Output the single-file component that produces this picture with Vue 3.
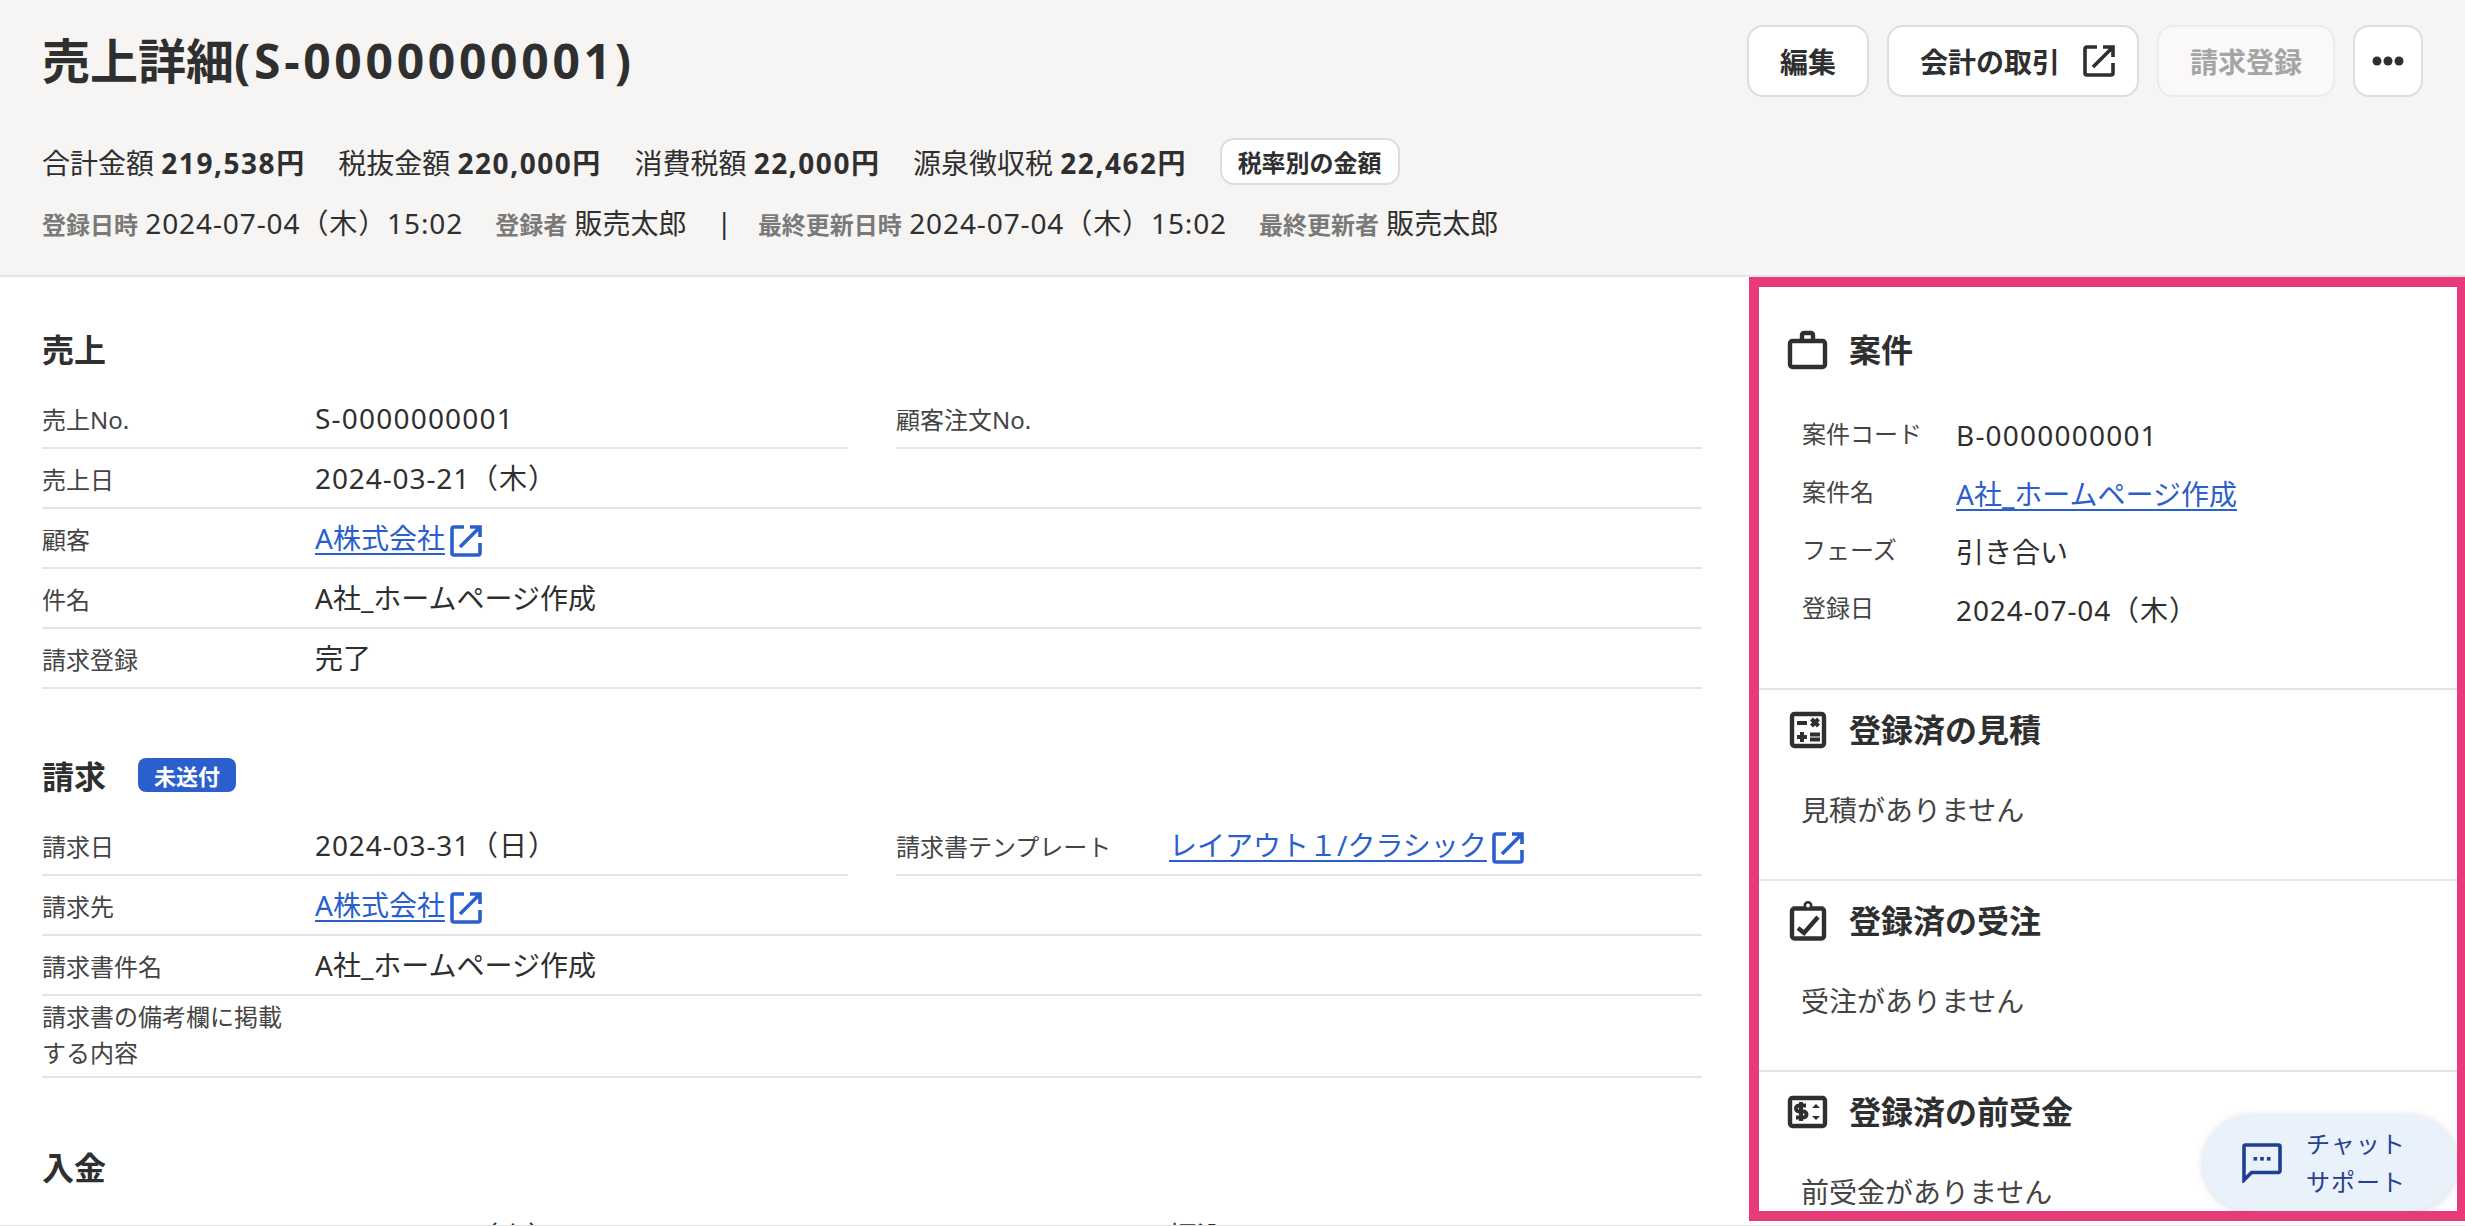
<script setup>
const summary = [
  { label: "合計金額", value: "219,538円" },
  { label: "税抜金額", value: "220,000円" },
  { label: "消費税額", value: "22,000円" },
  { label: "源泉徴収税", value: "22,462円" },
]

const salesRows = [
  { label: "売上No.", value: "S-0000000001", half: true, kind: "code" },
  { label: "顧客注文No.", value: "", half: true },
  { label: "売上日", value: "2024-03-21（木）", kind: "date" },
  { label: "顧客", link: "A株式会社" },
  { label: "件名", value: "A社_ホームページ作成" },
  { label: "請求登録", value: "完了" },
]

const billingRows = [
  { label: "請求日", value: "2024-03-31（日）", half: true, kind: "date" },
  { label: "請求書テンプレート", link: "レイアウト１/クラシック", half: true },
  { label: "請求先", link: "A株式会社" },
  { label: "請求書件名", value: "A社_ホームページ作成" },
  { label: "請求書の備考欄に掲載する内容", value: "", tall: true },
]

const paymentRows = [
  { label: "入金日", value: "2024-04-30（火）", half: true, kind: "date" },
  { label: "入金方法", value: "振込", half: true },
]

const sections = [
  { title: "売上", rows: salesRows },
  { title: "請求", badge: "未送付", rows: billingRows },
  { title: "入金", rows: paymentRows },
]

const projectRows = [
  { label: "案件コード", value: "B-0000000001", kind: "code" },
  { label: "案件名", link: "A社_ホームページ作成" },
  { label: "フェーズ", value: "引き合い" },
  { label: "登録日", value: "2024-07-04（木）", kind: "date" },
]
</script>

<template>
  <div class="page">
    <header class="header">
      <div class="title-row">
        <h1 class="title">売上詳細<span class="title-no">(S-0000000001)</span></h1>
        <div class="actions">
          <button class="btn">編集</button>
          <button class="btn btn-ext">
            会計の取引
            <svg class="ext" viewBox="0 0 32 32"><path d="M14 2H4a2 2 0 0 0-2 2v24a2 2 0 0 0 2 2h24a2 2 0 0 0 2-2V18M20 2h10v10M30 2 10 22" /></svg>
          </button>
          <button class="btn btn-disabled">請求登録</button>
          <button class="btn btn-more" aria-label="その他">
            <svg width="32" height="10" viewBox="0 0 32 10"><circle cx="5" cy="5" r="4.5" /><circle cx="16" cy="5" r="4.5" /><circle cx="27" cy="5" r="4.5" /></svg>
          </button>
        </div>
      </div>
      <div class="summary">
        <span v-for="item in summary" :key="item.label">{{ item.label }} <b>{{ item.value }}</b></span>
        <button class="chip">税率別の金額</button>
      </div>
      <div class="meta">
        <span><small>登録日時</small> <i class="date">2024-07-04（木）15:02</i></span>
        <span><small>登録者</small> <i>販売太郎</i></span>
        <span class="sep">|</span>
        <span><small>最終更新日時</small> <i class="date">2024-07-04（木）15:02</i></span>
        <span><small>最終更新者</small> <i>販売太郎</i></span>
      </div>
    </header>

    <div class="content">
      <main class="main">
        <section v-for="section in sections" :key="section.title" class="block">
          <h2 class="block-title">
            {{ section.title }}
            <span v-if="section.badge" class="badge">{{ section.badge }}</span>
          </h2>
          <div class="rows">
            <div
              v-for="row in section.rows"
              :key="row.label"
              class="row"
              :class="{ full: !row.half, tall: row.tall }"
            >
              <div class="row-label">{{ row.label }}</div>
              <div class="row-value" :class="row.kind">
                <template v-if="row.link">
                  <a class="link">{{ row.link }}</a>
                  <svg class="ext ext-link" viewBox="0 0 32 32"><path d="M14 2H4a2 2 0 0 0-2 2v24a2 2 0 0 0 2 2h24a2 2 0 0 0 2-2V18M20 2h10v10M30 2 10 22" /></svg>
                </template>
                <template v-else>{{ row.value }}</template>
              </div>
            </div>
          </div>
        </section>
      </main>

      <aside class="side">
        <section class="side-block first">
          <h3 class="side-title">
            <svg class="side-icon" viewBox="0 0 40 40"><rect x="2" y="11" width="35" height="26" rx="2.5" /><path d="M14 10V5a2 2 0 0 1 2-2h7a2 2 0 0 1 2 2v5" /></svg>
            案件
          </h3>
          <div class="side-rows">
            <div v-for="row in projectRows" :key="row.label" class="side-row">
              <div class="side-label">{{ row.label }}</div>
              <div class="side-value" :class="row.kind">
                <a v-if="row.link" class="link">{{ row.link }}</a>
                <template v-else>{{ row.value }}</template>
              </div>
            </div>
          </div>
        </section>

        <section class="side-block">
          <h3 class="side-title">
            <svg class="side-icon" viewBox="0 0 40 40">
              <rect x="4" y="4" width="32" height="32" rx="2.5" />
              <path class="thin" d="M9 13h10M23.5 9l7 7M30.5 9l-7 7M9 27h10M14 22v10M22 24.5h10M22 29.5h10" />
            </svg>
            登録済の見積
          </h3>
          <p class="empty">見積がありません</p>
        </section>

        <section class="side-block">
          <h3 class="side-title">
            <svg class="side-icon" viewBox="0 0 40 40">
              <rect x="4" y="7.5" width="32" height="30" rx="2.5" />
              <path d="m10 27 6 5 14-16" />
              <circle cx="20" cy="4.5" r="3.2" class="knob" />
            </svg>
            登録済の受注
          </h3>
          <p class="empty">受注がありません</p>
        </section>

        <section class="side-block">
          <h3 class="side-title">
            <svg class="side-icon" viewBox="0 0 40 40">
              <rect x="2" y="6" width="35" height="28" rx="2.5" />
              <path class="thin" d="M18 13.5h-7a2.5 2.5 0 0 0 0 6h4.5a2.5 2.5 0 0 1 0 6H8M13 10v19" />
              <path class="fill" d="M28 12l4 4h-8zM28 28l-4-4h8z" />
            </svg>
            登録済の前受金
          </h3>
          <p class="empty">前受金がありません</p>
        </section>

        <div class="chat">
          <svg class="chat-icon" viewBox="0 0 40 40">
            <path d="M2 3.5a1.5 1.5 0 0 1 1.5-1.5h33a1.5 1.5 0 0 1 1.5 1.5V28a1.5 1.5 0 0 1-1.5 1.5H9.5L2 37z" />
            <rect x="11.5" y="14" width="3.6" height="3.6" class="dot" />
            <rect x="18.2" y="14" width="3.6" height="3.6" class="dot" />
            <rect x="24.9" y="14" width="3.6" height="3.6" class="dot" />
          </svg>
          <div class="chat-text">チャット<br />サポート</div>
        </div>
      </aside>
    </div>
  </div>
</template>

<style scoped>
.page {
  height: 100vh;
  box-sizing: border-box;
  display: flex;
  flex-direction: column;
  overflow: hidden;
  background: #fff;
  color: #2f2f2f;
  border-bottom: 1px solid #e5e5e5;
  font-family: "Noto Sans", "Noto Sans CJK JP", sans-serif;
  font-size: 28px;
}

.date {
  letter-spacing: 0.032em;
}

.code {
  letter-spacing: 0.043em;
}

.header {
  flex: none;
  box-sizing: border-box;
  height: 277px;
  padding: 25px 42px 0;
  background: #f6f5f3;
  border-bottom: 2px solid #e5e5e5;
}

.title-row {
  display: flex;
  justify-content: space-between;
  align-items: center;
  height: 72px;
}

.title {
  margin: 0;
  font-size: 48px;
  font-weight: 700;
  line-height: 72px;
}

.title-no {
  letter-spacing: 0.077em;
}

.actions {
  display: flex;
  gap: 18px;
}

.btn {
  display: flex;
  align-items: center;
  justify-content: center;
  box-sizing: border-box;
  height: 72px;
  padding: 0 31px;
  background: #fff;
  border: 2px solid #dddddd;
  border-radius: 16px;
  font: inherit;
  font-weight: 700;
  color: #2f2f2f;
}

.btn-ext {
  gap: 23px;
  padding-right: 22px;
}

.btn-disabled {
  background: #faf8f8;
  border-color: #ebebeb;
  color: #a5a5a5;
}

.btn-more {
  width: 70px;
  padding: 0;
}

.btn-more svg {
  fill: #2f2f2f;
}

.ext {
  width: 32px;
  height: 32px;
  fill: none;
  stroke: currentColor;
  stroke-width: 3.6;
  flex: none;
}

.summary {
  display: flex;
  align-items: center;
  gap: 32.5px;
  margin-top: 41px;
  height: 47px;
  white-space: nowrap;
}

.summary b {
  font-weight: 700;
  letter-spacing: 0.055em;
}

.chip {
  box-sizing: border-box;
  height: 47px;
  padding: 0 16px;
  background: #fff;
  border: 2px solid #dddddd;
  border-radius: 14px;
  font: inherit;
  font-size: 24px;
  font-weight: 700;
  color: #2f2f2f;
}

.meta {
  display: flex;
  align-items: center;
  gap: 32px;
  margin-top: 19px;
  height: 36px;
  white-space: nowrap;
}

.meta small {
  font-size: 24px;
  font-weight: 700;
  color: #7a7a7a;
}

.meta i {
  font-style: normal;
}

.sep {
  margin: 0 -6px 0 -2px;
}

.content {
  flex: 1;
  min-height: 0;
  display: flex;
}

.main {
  flex: none;
  box-sizing: border-box;
  width: 1749px;
  padding: 53px 47px 0 42px;
}

.block + .block {
  margin-top: 68px;
}

.block:last-child {
  margin-top: 70px;
}

.block-title {
  display: flex;
  align-items: center;
  box-sizing: border-box;
  gap: 32px;
  height: 40px;
  padding-bottom: 4px;
  margin: 0 0 19px;
  font-size: 32px;
  font-weight: 700;
}

.badge {
  display: flex;
  align-items: center;
  justify-content: center;
  width: 98px;
  height: 34px;
  background: #2b5fce;
  border-radius: 8px;
  color: #fff;
  font-size: 22px;
  font-weight: 700;
}

.rows {
  display: grid;
  grid-template-columns: 806px 806px;
  column-gap: 48px;
}

.row {
  display: flex;
  box-sizing: border-box;
  align-items: center;
  height: 60px;
  border-bottom: 2px solid #e5e5e5;
}

.row.full {
  grid-column: 1 / -1;
}

.row.tall {
  height: 82px;
}

.row-label {
  flex: none;
  box-sizing: border-box;
  width: 273px;
  padding: 4px 24px 0 0;
  font-size: 24px;
  line-height: 36px;
  color: #444;
}

.tall .row-label {
  padding: 0 24px 3px 0;
}

.row-value {
  display: flex;
  align-items: center;
  line-height: 40px;
  white-space: nowrap;
}

.link {
  color: #2b5fce;
  text-decoration: underline;
  text-decoration-thickness: 2px;
  text-underline-offset: 4px;
}

.ext-link {
  margin: 6px 0 0 5px;
  color: #2b5fce;
}

.side {
  position: relative;
  flex: 1;
  min-width: 0;
  margin-bottom: 4px;
  border: 10px solid #e83a7a;
  border-right-width: 8px;
  overflow: hidden;
}

.side-block {
  box-sizing: border-box;
  height: 191px;
  padding: 20px 0 0 29px;
  border-bottom: 2px solid #e5e5e5;
}

.side-block.first {
  height: 403px;
  padding-top: 43px;
}

.side-title {
  display: flex;
  align-items: center;
  gap: 21px;
  height: 40px;
  margin: 0;
  font-size: 32px;
  font-weight: 700;
  line-height: 36px;
}

.side-icon {
  flex: none;
  width: 40px;
  height: 40px;
  fill: none;
  stroke: #2f2f2f;
  stroke-width: 4.4;
  overflow: visible;
}

.side-icon .thin {
  stroke-width: 4;
}

.side-icon .fill {
  fill: #2f2f2f;
  stroke: none;
}

.side-icon .knob {
  fill: #fff;
  stroke-width: 2.6;
}

.side-rows {
  margin: 36px 0 0 14px;
}

.side-row {
  display: flex;
  align-items: center;
  height: 58px;
}

.side-label {
  flex: none;
  width: 154px;
  padding-bottom: 6px;
  font-size: 24px;
  color: #444;
}

.side-value {
  white-space: nowrap;
}

.empty {
  margin: 40px 0 0 13px;
  line-height: 40px;
  color: #444;
}

.chat {
  position: absolute;
  right: 0;
  bottom: 0;
  display: flex;
  align-items: center;
  box-sizing: border-box;
  width: 254px;
  height: 96px;
  padding: 0 0 0 39px;
  gap: 24px;
  background: #e9f1fb;
  border-radius: 48px;
  box-shadow: 0 1px 8px rgba(0, 0, 0, 0.16);
}

.chat-icon {
  flex: none;
  width: 40px;
  height: 40px;
  fill: none;
  stroke: #1f3f8f;
  stroke-width: 3.6;
}

.chat-icon .dot {
  fill: #1f3f8f;
  stroke: none;
}

.chat-text {
  font-size: 24px;
  line-height: 38px;
  letter-spacing: 0.04em;
  color: #25408f;
}
</style>

<style>
html,
body {
  overflow: hidden;
  background: #fff;
}
</style>
